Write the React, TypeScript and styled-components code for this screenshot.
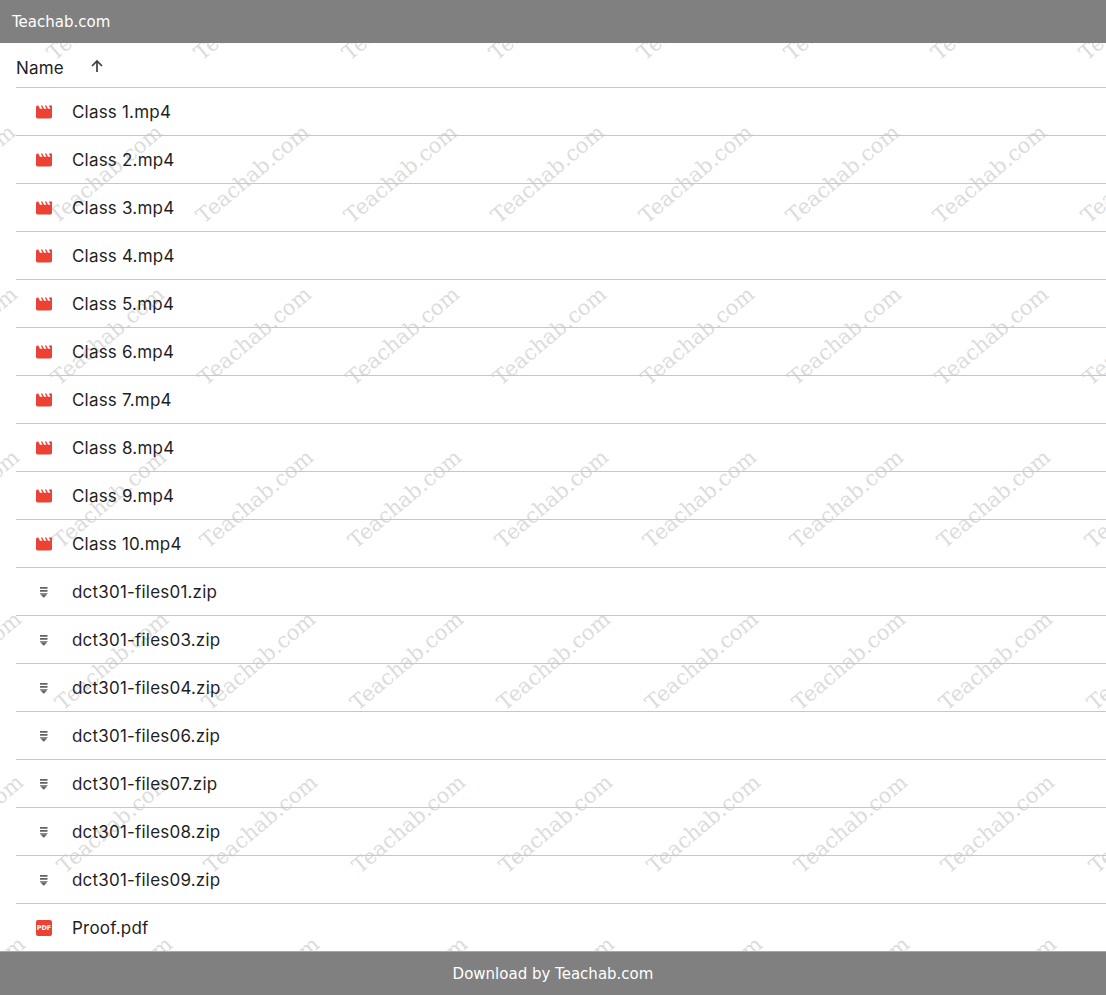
import styled, { createGlobalStyle } from "styled-components"

const GlobalStyle = createGlobalStyle`
    html, body {
        margin: 0;
        padding: 0;
        background: #fff;
    }
    * {
        box-sizing: border-box;
    }
`

type FileKind = "video" | "zip" | "pdf"

const files: { name: string; kind: FileKind }[] = [
    { name: "Class 1.mp4", kind: "video" },
    { name: "Class 2.mp4", kind: "video" },
    { name: "Class 3.mp4", kind: "video" },
    { name: "Class 4.mp4", kind: "video" },
    { name: "Class 5.mp4", kind: "video" },
    { name: "Class 6.mp4", kind: "video" },
    { name: "Class 7.mp4", kind: "video" },
    { name: "Class 8.mp4", kind: "video" },
    { name: "Class 9.mp4", kind: "video" },
    { name: "Class 10.mp4", kind: "video" },
    { name: "dct301-files01.zip", kind: "zip" },
    { name: "dct301-files03.zip", kind: "zip" },
    { name: "dct301-files04.zip", kind: "zip" },
    { name: "dct301-files06.zip", kind: "zip" },
    { name: "dct301-files07.zip", kind: "zip" },
    { name: "dct301-files08.zip", kind: "zip" },
    { name: "dct301-files09.zip", kind: "zip" },
    { name: "Proof.pdf", kind: "pdf" },
]

// watermark grid, measured from the screenshot
const marks: { x: number; y: number }[] = []
for (let row = 0; row < 7; row++) {
    for (let col = -2; col < 9; col++) {
        marks.push({ x: 58 + col * 147.4 + row * 2, y: -2 + row * 162.5 })
    }
}

function FileIcon({ kind }: { kind: FileKind }) {
    if (kind === "video") {
        return (
            <svg width="16" height="16" viewBox="2 2 20 20">
                <path fill="#ea4335" d="M18 4l2 4h-3l-2-4h-2l2 4h-3l-2-4H8l2 4H7L5 4H4c-1.100 0-1.990.900-1.990 2L2 18c0 1.100.900 2 2 2h16c1.100 0 2-.900 2-2V4h-4z" />
            </svg>
        )
    }
    if (kind === "zip") {
        return (
            <svg width="16" height="16" viewBox="0 0 16 16">
                <path fill="#5f6368" d="M4 3h7.500v1.700H4zM4 6h7.500v1.700H4zM4 9h7.500v.800H4zM4.200 10.200h7.100L7.750 13.800z" />
            </svg>
        )
    }
    return <PdfBadge>PDF</PdfBadge>
}

export default function App() {
    return (
        <Page>
            <GlobalStyle />
            <TopBar>Teachab.com</TopBar>
            <Main>
                <Watermarks>
                    {marks.map((m, i) => (
                        <Mark key={i} style={{ left: m.x, top: m.y }}>Teachab.com</Mark>
                    ))}
                </Watermarks>
                <FileList>
                    <HeaderRow>
                        <span>Name</span>
                        <SortArrow width="16" height="16" viewBox="0 0 16 16">
                            <path fill="none" stroke="#3c4043" strokeWidth="1.700" d="M8 14V3M3 8l5-5 5 5" />
                        </SortArrow>
                    </HeaderRow>
                    {files.map((file) => (
                        <FileRow key={file.name}>
                            <IconCell>
                                <FileIcon kind={file.kind} />
                            </IconCell>
                            <FileName>{file.name}</FileName>
                        </FileRow>
                    ))}
                </FileList>
            </Main>
            <BottomBar>Download by Teachab.com</BottomBar>
        </Page>
    )
}

const Page = styled.div`
    height: 995px;
    display: flex;
    flex-direction: column;
    overflow: hidden;
    font-family: Inter, "Liberation Sans", sans-serif;
`
const TopBar = styled.header`
    height: 43px;
    flex: none;
    display: flex;
    align-items: center;
    padding-left: 12px;
    background: #808080;
    color: #fff;
    font-family: "DejaVu Sans", sans-serif;
    font-size: 15px;
    position: relative;
    z-index: 2;
`
const BottomBar = styled.footer`
    height: 44px;
    flex: none;
    display: flex;
    align-items: center;
    justify-content: center;
    background: #808080;
    border-top: 1px solid #a8a8a8;
    color: #fff;
    font-family: "DejaVu Sans", sans-serif;
    font-size: 15px;
    position: relative;
    z-index: 2;
`
const Main = styled.main`
    flex: 1;
    position: relative;
    overflow: hidden;
    padding-left: 16px;
`
const Watermarks = styled.div`
    position: absolute;
    inset: 0;
    overflow: hidden;
    pointer-events: none;
`
const Mark = styled.span`
    position: absolute;
    font-family: "DejaVu Serif", serif;
    font-size: 21px;
    line-height: 24px;
    color: #dcdcdc;
    white-space: nowrap;
    transform-origin: left bottom;
    transform: rotate(-40deg);
`
const FileList = styled.div`
    position: relative;
    display: flex;
    flex-direction: column;
`
const HeaderRow = styled.div`
    height: 45px;
    display: flex;
    align-items: center;
    border-bottom: 1px solid #c7c7c7;
    color: #1f1f1f;
    font-size: 17px;
    letter-spacing: 0.2px;
    padding-top: 5px;
`
const SortArrow = styled.svg`
    margin-left: 25px;
    margin-top: -3px;
`
const FileRow = styled.div`
    height: 48px;
    display: flex;
    align-items: center;
    border-bottom: 1px solid #c7c7c7;
    &:last-child {
        border-bottom: none;
    }
`
const IconCell = styled.div`
    width: 56px;
    padding-left: 20px;
    display: flex;
    align-items: center;
`
const FileName = styled.span`
    color: #1f1f1f;
    font-size: 17px;
    letter-spacing: 0.2px;
`
const PdfBadge = styled.span`
    width: 16px;
    height: 16px;
    display: flex;
    align-items: center;
    justify-content: center;
    background: #ea4335;
    border-radius: 2px;
    color: #fff;
    font-family: "DejaVu Sans", sans-serif;
    font-size: 6.5px;
    font-weight: 700;
`
